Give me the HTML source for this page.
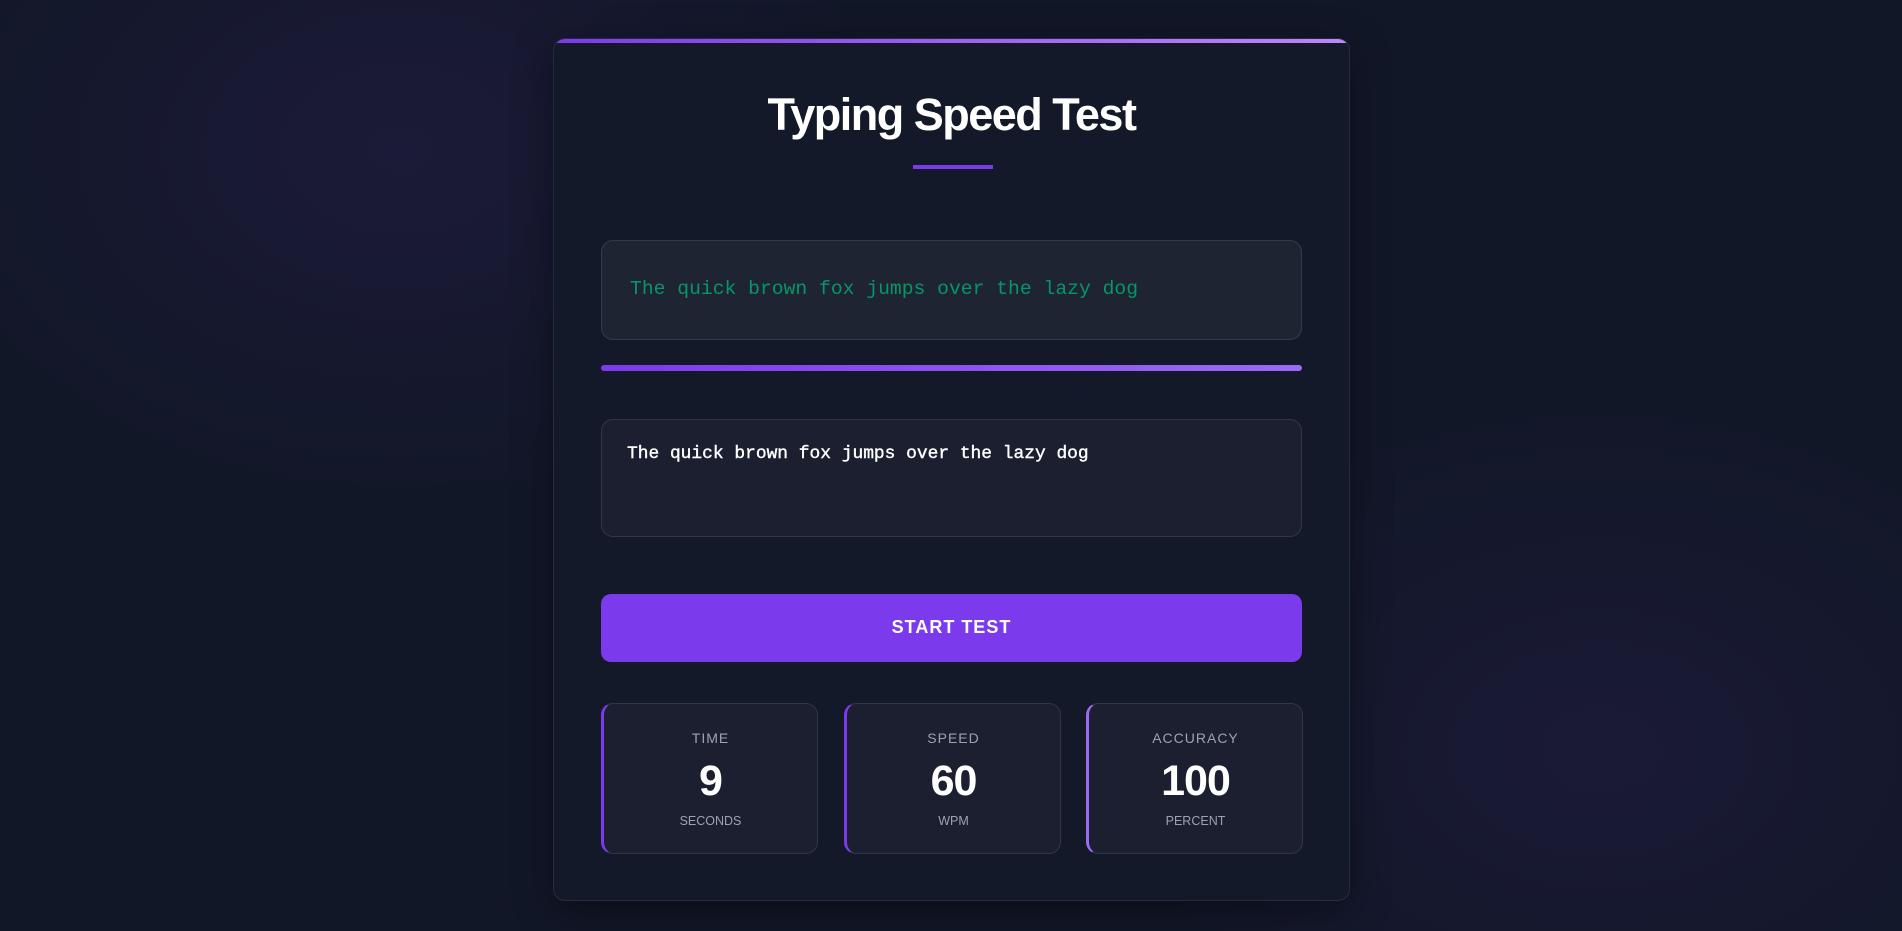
<!DOCTYPE html>
<html><head><meta charset="utf-8"><style>
*{box-sizing:border-box;margin:0;padding:0}
html,body{width:1902px;height:931px;overflow:hidden}
body{background:#121728;font-family:"Liberation Sans",sans-serif;position:relative;
background-image:radial-gradient(ellipse 700px 500px at 400px 150px,rgba(45,32,85,.35),transparent 70%),radial-gradient(ellipse 700px 500px at 1600px 750px,rgba(45,32,85,.3),transparent 70%);}
.card{position:absolute;left:553px;top:38px;width:797px;height:863px;background:#131929;border:1px solid #262c40;border-radius:12px;overflow:hidden;box-shadow:0 10px 40px rgba(0,0,0,.4)}
.bar{position:absolute;left:0;top:0;right:0;height:4px;background:linear-gradient(90deg,#7c3aed,#c084fc)}
h1{position:absolute;left:0;right:0;top:48px;text-align:center;color:#fff;font-size:45px;font-weight:bold;letter-spacing:-1.5px;line-height:56px}
.ul{position:absolute;left:359px;top:126px;width:80px;height:4px;background:#7c3aed}
.sample{position:absolute;left:47px;top:201px;width:701px;height:100px;background:#1f2433;border:1px solid #343a4d;border-radius:12px;color:#059669;font-family:"Liberation Mono",monospace;font-size:19.7px;padding-left:28px;line-height:96px}
.prog{position:absolute;left:47px;top:326px;width:701px;height:6px;border-radius:3px;background:linear-gradient(90deg,#7c3aed,#9b6af5)}
.ta{position:absolute;left:47px;top:380px;width:701px;height:118px;background:#1b1f2f;border:1px solid #30364a;border-radius:12px;color:#fff;font-family:"Liberation Mono",monospace;font-size:17.9px;padding:24px 0 0 25px;-webkit-text-stroke:0.4px #fff}
.btn{position:absolute;left:47px;top:555px;width:701px;height:68px;background:#7c3aed;border-radius:10px;color:#fff;font-weight:bold;font-size:18px;letter-spacing:1px;text-align:center;line-height:66px}
.stat{position:absolute;top:664px;width:217px;height:151px;background:#1b1f2f;border:1px solid #30364a;border-left:3px solid #7c3aed;border-radius:12px;text-align:center;color:#fff}
.l{position:absolute;left:0;right:0;top:26px;font-size:14px;letter-spacing:1px;color:#9ca3af}
.v{position:absolute;left:0;right:0;top:52px;font-size:43px;font-weight:bold;line-height:50px;letter-spacing:-1px}
.u{position:absolute;left:0;right:0;top:110px;font-size:12.5px;color:#9ca3af}
</style></head><body>
<div class="card"><div class="bar"></div>
<h1>Typing Speed Test</h1><div class="ul"></div>
<div class="sample">The quick brown fox jumps over the lazy dog</div>
<div class="prog"></div>
<div class="ta">The quick brown fox jumps over the lazy dog</div>
<div class="btn">START TEST</div>
<div class="stat" style="left:47px"><div class="l">TIME</div><div class="v">9</div><div class="u">SECONDS</div></div>
<div class="stat" style="left:290px"><div class="l">SPEED</div><div class="v">60</div><div class="u">WPM</div></div>
<div class="stat" style="left:532px;border-left-color:#9b6af5"><div class="l">ACCURACY</div><div class="v">100</div><div class="u">PERCENT</div></div>
</div>
</body></html>
